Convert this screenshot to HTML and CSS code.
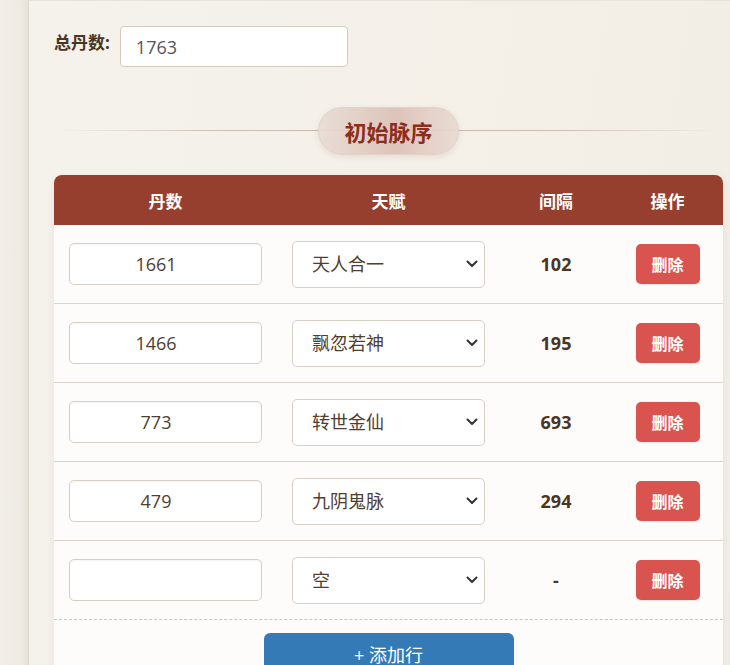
FILE: index.html
```html
<!DOCTYPE html>
<html lang="zh-CN">
<head>
<meta charset="utf-8">
<title>初始脉序</title>
<link rel="stylesheet" href="styles.css">
</head>
<body>
<div class="page">
  <div class="side"></div>
  <div class="panel">
    <div class="total-row">
      <label class="total-label" for="total">总丹数:</label>
      <input class="total-input" id="total" type="text" value="1763">
    </div>

    <div class="section-title">
      <span class="pill">初始脉序</span>
    </div>

    <div class="card">
      <div class="grid head">
        <div class="cell">丹数</div>
        <div class="cell">天赋</div>
        <div class="cell">间隔</div>
        <div class="cell">操作</div>
      </div>

      <div class="grid row">
        <div class="cell"><input class="num-input" type="text" value="1661"></div>
        <div class="cell"><select class="talent"><option>天人合一</option></select></div>
        <div class="cell gap">102</div>
        <div class="cell"><button class="del">删除</button></div>
      </div>
      <div class="grid row">
        <div class="cell"><input class="num-input" type="text" value="1466"></div>
        <div class="cell"><select class="talent"><option>飘忽若神</option></select></div>
        <div class="cell gap">195</div>
        <div class="cell"><button class="del">删除</button></div>
      </div>
      <div class="grid row">
        <div class="cell"><input class="num-input" type="text" value="773"></div>
        <div class="cell"><select class="talent"><option>转世金仙</option></select></div>
        <div class="cell gap">693</div>
        <div class="cell"><button class="del">删除</button></div>
      </div>
      <div class="grid row">
        <div class="cell"><input class="num-input" type="text" value="479"></div>
        <div class="cell"><select class="talent"><option>九阴鬼脉</option></select></div>
        <div class="cell gap">294</div>
        <div class="cell"><button class="del">删除</button></div>
      </div>
      <div class="grid row last">
        <div class="cell"><input class="num-input" type="text" value=""></div>
        <div class="cell"><select class="talent"><option>空</option></select></div>
        <div class="cell gap">-</div>
        <div class="cell"><button class="del">删除</button></div>
      </div>

      <div class="foot">
        <button class="add">+ 添加行</button>
      </div>
    </div>
  </div>
</div>
</body>
</html>
```

FILE: styles.css
```css
* { box-sizing: border-box; }

html, body {
  margin: 0;
  padding: 0;
  height: 100%;
  overflow: hidden;
}

body {
  background: #f1ede6;
  font-family: "Open Sans", "Noto Sans CJK SC", sans-serif;
  color: #4a3525;
}

.page {
  display: flex;
  min-height: 100%;
}

.side {
  width: 28px;
  flex: none;
  background: linear-gradient(90deg, #f2eee8, #eee9e1);
}

.panel {
  flex: none;
  width: 720px;
  background: linear-gradient(100deg, #f5f2ec 0%, #f4f0e8 60%, #f1ede5 100%);
  border-left: 1px solid #ddd6cb;
  border-top: 1px solid #e8e3da;
  box-shadow: -3px 0 6px rgba(90, 70, 50, 0.05);
  padding: 25px 0 0 25px;
}

.total-row {
  display: flex;
  align-items: flex-start;
  gap: 10px;
  height: 41px;
}

.total-label {
  font-size: 17px;
  font-weight: 700;
  line-height: 1;
  color: #4a3525;
  padding-top: 8px;
}

.total-input {
  width: 228px;
  height: 41px;
  border: 1px solid #d2cbc1;
  border-radius: 4px;
  background: #fff;
  padding: 0 15px;
  font-family: inherit;
  font-size: 18px;
  color: #555;
  outline: none;
}

.section-title {
  position: relative;
  display: flex;
  justify-content: center;
  width: 669px;
  margin-top: 40px;
  margin-bottom: 20px;
}

.section-title::before {
  content: "";
  position: absolute;
  left: 0;
  right: 0;
  top: 23px;
  height: 1px;
  background: linear-gradient(90deg, rgba(180, 160, 150, 0) 0%, #cdbdb3 25%, #c9b6ab 50%, #cdbdb3 75%, rgba(180, 160, 150, 0) 100%);
}

.pill {
  position: relative;
  display: inline-flex;
  align-items: center;
  height: 48px;
  padding: 0 25px;
  border-radius: 24px;
  border: 1px solid #e1d3ca;
  background: linear-gradient(90deg, rgba(232, 220, 212, 0.92) 0%, rgba(220, 192, 182, 0.92) 55%, rgba(232, 218, 210, 0.92) 100%);
  box-shadow: 0 2px 6px rgba(120, 80, 60, 0.12);
  font-size: 22px;
  font-weight: 700;
  color: #8c2d1d;
}

.card {
  width: 669px;
  background: #fdfcfa;
  border-radius: 8px;
  overflow: hidden;
  box-shadow: 0 2px 8px rgba(90, 60, 40, 0.08);
}

.grid {
  display: grid;
  grid-template-columns: 223px 223px 112px 111px;
}

.cell {
  display: flex;
  align-items: center;
  justify-content: center;
  padding: 0 15px;
}

.head {
  height: 50px;
  background: #963f2f;
  color: #fff;
  font-size: 17px;
  font-weight: 700;
}

.row {
  height: 79px;
  border-bottom: 1px solid #d9d3c9;
}

.row.last {
  border-bottom: 1px dashed #cdc6bb;
}

.num-input {
  width: 100%;
  height: 42px;
  border: 1px solid #d6cfc4;
  border-radius: 5px;
  background: #fff;
  box-shadow: inset 0 1px 2px rgba(0, 0, 0, 0.05);
  padding: 0 20px 0 1px;
  text-align: center;
  font-family: inherit;
  font-size: 18px;
  color: #4f3e31;
  outline: none;
}

.talent {
  -webkit-appearance: none;
  appearance: none;
  width: 100%;
  height: 47px;
  border: 1px solid #d6cfc4;
  border-radius: 5px;
  background-color: #fff;
  background-image: url("data:image/svg+xml,%3Csvg xmlns='http://www.w3.org/2000/svg' width='12' height='8' viewBox='0 0 12 8'%3E%3Cpath d='M1.5 1.5 L6 6 L10.5 1.5' fill='none' stroke='%23333' stroke-width='2' stroke-linecap='round' stroke-linejoin='round'/%3E%3C/svg%3E");
  background-repeat: no-repeat;
  background-position: right 6px center;
  background-size: 12px 8px;
  padding: 0 24px 0 19px;
  font-family: inherit;
  font-size: 18px;
  color: #4f3e31;
  outline: none;
}

.gap {
  font-size: 18px;
  font-weight: 700;
  color: #4a3525;
}

.del {
  width: 64px;
  height: 40px;
  border: none;
  border-radius: 5px;
  background: #d9534f;
  color: #fff;
  font-family: inherit;
  font-size: 16px;
  font-weight: 700;
  box-shadow: 0 1px 2px rgba(0, 0, 0, 0.1);
  cursor: pointer;
}

.foot {
  display: flex;
  justify-content: center;
  padding: 13px 0 14px;
}

.add {
  width: 250px;
  height: 42px;
  border: none;
  border-radius: 6px;
  background: #337ab7;
  color: #fff;
  font-family: inherit;
  font-size: 18px;
  cursor: pointer;
}
```
